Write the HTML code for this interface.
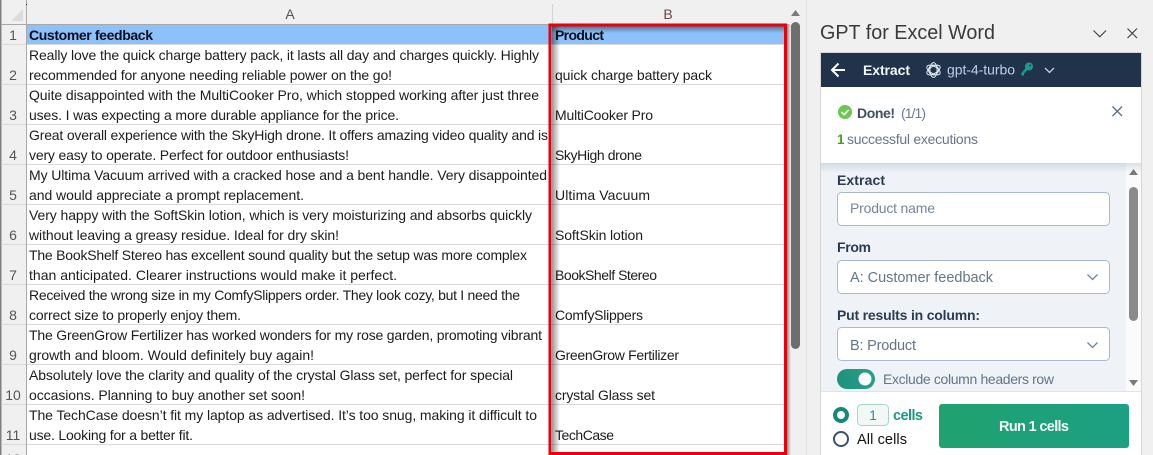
<!DOCTYPE html>
<html><head><meta charset="utf-8"><style>
html,body{margin:0;padding:0;width:1153px;height:455px;overflow:hidden;background:#f0f0f0}
svg{display:block}
text{font-family:"Liberation Sans",sans-serif;font-size:14px;fill:#1c1c1c}
.c{font-size:14px}
.h{font-size:14px;font-weight:bold;fill:#0c0c1c}
.n{fill:#555;font-size:14px;text-anchor:middle}
.l{font-size:14px;font-weight:bold;fill:#2a3b52}
.v{font-size:14.5px;fill:#64748a}
</style></head><body>
<svg width="1153" height="455" viewBox="0 0 1153 455" xmlns="http://www.w3.org/2000/svg">
<defs>
<linearGradient id="sl" x1="0" x2="1" y1="0" y2="0"><stop offset="0" stop-color="#000" stop-opacity=".4"/><stop offset="1" stop-color="#000" stop-opacity="0"/></linearGradient>
<linearGradient id="st" x1="0" x2="0" y1="0" y2="1"><stop offset="0" stop-color="#000" stop-opacity=".42"/><stop offset="1" stop-color="#000" stop-opacity="0"/></linearGradient>
<linearGradient id="sr" x1="0" x2="1" y1="0" y2="0"><stop offset="0" stop-color="#000" stop-opacity=".4"/><stop offset="1" stop-color="#000" stop-opacity="0"/></linearGradient>
<linearGradient id="sp" x1="0" x2="0" y1="0" y2="1"><stop offset="0" stop-color="#8a9ab0" stop-opacity=".28"/><stop offset="1" stop-color="#8a9ab0" stop-opacity="0"/></linearGradient>
<linearGradient id="btn" x1="0" x2="1" y1="0" y2="0"><stop offset="0" stop-color="#20a170"/><stop offset="1" stop-color="#1ca083"/></linearGradient>
<linearGradient id="tg" x1="0" x2="1" y1="0" y2="0"><stop offset="0" stop-color="#20917c"/><stop offset="1" stop-color="#22a08a"/></linearGradient>
</defs>

<!-- sheet -->
<rect x="0" y="0" width="800" height="455" fill="#f0f0f0"/>
<rect x="27" y="25" width="760" height="430" fill="#fff"/>
<rect x="27" y="25" width="758" height="19" fill="#8cc1f9"/>
<rect x="0" y="0" width="1.5" height="455" fill="#808080"/>
<rect x="26" y="0" width="1" height="455" fill="#a8a8a8"/>
<rect x="1" y="24" width="786" height="1" fill="#a8a8a8"/>
<rect x="26" y="4" width="1" height="1" fill="#222"/>
<polygon points="23,9 23,21 11,21" fill="#dcdcdc"/>
<rect x="552" y="4" width="1" height="20" fill="#d4d4d4"/>

<g fill="#d9d9d9">
<rect x="27" y="44" width="758" height="1"/><rect x="27" y="84" width="758" height="1"/><rect x="27" y="124" width="758" height="1"/><rect x="27" y="164" width="758" height="1"/><rect x="27" y="204" width="758" height="1"/><rect x="27" y="244" width="758" height="1"/><rect x="27" y="284" width="758" height="1"/><rect x="27" y="324" width="758" height="1"/><rect x="27" y="364" width="758" height="1"/><rect x="27" y="404" width="758" height="1"/><rect x="27" y="444" width="758" height="1"/>
<rect x="1" y="44" width="25" height="1"/><rect x="1" y="84" width="25" height="1"/><rect x="1" y="124" width="25" height="1"/><rect x="1" y="164" width="25" height="1"/><rect x="1" y="204" width="25" height="1"/><rect x="1" y="244" width="25" height="1"/><rect x="1" y="284" width="25" height="1"/><rect x="1" y="324" width="25" height="1"/><rect x="1" y="364" width="25" height="1"/><rect x="1" y="404" width="25" height="1"/><rect x="1" y="444" width="25" height="1"/>
</g>

<text x="290" y="19" class="n">A</text>
<text x="668" y="19" class="n" style="fill:#6e4444">B</text>
<text x="13" y="40" class="n">1</text><text x="13" y="80" class="n">2</text><text x="13" y="120" class="n">3</text><text x="13" y="160" class="n">4</text><text x="13" y="200" class="n">5</text><text x="13" y="240" class="n">6</text><text x="13" y="280" class="n">7</text><text x="13" y="320" class="n">8</text><text x="13" y="360" class="n">9</text><text x="13" y="400" class="n">10</text><text x="13" y="440" class="n">11</text><text x="13" y="464" class="n">12</text>

<text x="29" y="40" class="h" textLength="124" lengthAdjust="spacing">Customer feedback</text>
<text x="555" y="40" class="h" textLength="49" lengthAdjust="spacing">Product</text>

<text x="29" y="60" class="c" textLength="510" lengthAdjust="spacing">Really love the quick charge battery pack, it lasts all day and charges quickly. Highly</text>
<text x="29" y="80" class="c" textLength="363" lengthAdjust="spacing">recommended for anyone needing reliable power on the go!</text>
<text x="29" y="100" class="c" textLength="510" lengthAdjust="spacing">Quite disappointed with the MultiCooker Pro, which stopped working after just three</text>
<text x="29" y="120" class="c" textLength="370" lengthAdjust="spacing">uses. I was expecting a more durable appliance for the price.</text>
<text x="29" y="140" class="c" textLength="519" lengthAdjust="spacing">Great overall experience with the SkyHigh drone. It offers amazing video quality and is</text>
<text x="29" y="160" class="c" textLength="320" lengthAdjust="spacing">very easy to operate. Perfect for outdoor enthusiasts!</text>
<text x="29" y="180" class="c" textLength="518" lengthAdjust="spacing">My Ultima Vacuum arrived with a cracked hose and a bent handle. Very disappointed</text>
<text x="29" y="200" class="c" textLength="275" lengthAdjust="spacing">and would appreciate a prompt replacement.</text>
<text x="29" y="220" class="c" textLength="503" lengthAdjust="spacing">Very happy with the SoftSkin lotion, which is very moisturizing and absorbs quickly</text>
<text x="29" y="240" class="c" textLength="310" lengthAdjust="spacing">without leaving a greasy residue. Ideal for dry skin!</text>
<text x="29" y="260" class="c" textLength="498" lengthAdjust="spacing">The BookShelf Stereo has excellent sound quality but the setup was more complex</text>
<text x="29" y="280" class="c" textLength="368" lengthAdjust="spacing">than anticipated. Clearer instructions would make it perfect.</text>
<text x="29" y="300" class="c" textLength="491" lengthAdjust="spacing">Received the wrong size in my ComfySlippers order. They look cozy, but I need the</text>
<text x="29" y="320" class="c" textLength="212" lengthAdjust="spacing">correct size to properly enjoy them.</text>
<text x="29" y="340" class="c" textLength="513" lengthAdjust="spacing">The GreenGrow Fertilizer has worked wonders for my rose garden, promoting vibrant</text>
<text x="29" y="360" class="c" textLength="285" lengthAdjust="spacing">growth and bloom. Would definitely buy again!</text>
<text x="29" y="380" class="c" textLength="484" lengthAdjust="spacing">Absolutely love the clarity and quality of the crystal Glass set, perfect for special</text>
<text x="29" y="400" class="c" textLength="276" lengthAdjust="spacing">occasions. Planning to buy another set soon!</text>
<text x="29" y="420" class="c" textLength="508" lengthAdjust="spacing">The TechCase doesn’t fit my laptop as advertised. It’s too snug, making it difficult to</text>
<text x="29" y="440" class="c" textLength="164" lengthAdjust="spacing">use. Looking for a better fit.</text>

<text x="555" y="80" class="c" textLength="157" lengthAdjust="spacing">quick charge battery pack</text>
<text x="555" y="120" class="c" textLength="98" lengthAdjust="spacing">MultiCooker Pro</text>
<text x="555" y="160" class="c" textLength="87" lengthAdjust="spacing">SkyHigh drone</text>
<text x="555" y="200" class="c" textLength="95" lengthAdjust="spacing">Ultima Vacuum</text>
<text x="555" y="240" class="c" textLength="88" lengthAdjust="spacing">SoftSkin lotion</text>
<text x="555" y="280" class="c" textLength="102" lengthAdjust="spacing">BookShelf Stereo</text>
<text x="555" y="320" class="c" textLength="88" lengthAdjust="spacing">ComfySlippers</text>
<text x="555" y="360" class="c" textLength="124" lengthAdjust="spacing">GreenGrow Fertilizer</text>
<text x="555" y="400" class="c" textLength="100" lengthAdjust="spacing">crystal Glass set</text>
<text x="555" y="440" class="c" textLength="59" lengthAdjust="spacing">TechCase</text>

<!-- selection shadow + red box -->
<rect x="552" y="26" width="8" height="426" fill="url(#sl)"/>
<rect x="552" y="26" width="232" height="7" fill="url(#st)"/>
<rect x="787" y="24" width="4" height="431" fill="url(#sr)"/>
<rect x="550" y="25" width="235.5" height="428.5" fill="none" stroke="#e8000b" stroke-width="3"/>

<!-- sheet scrollbar -->
<rect x="791" y="0" width="9" height="455" fill="#f0f0f0" opacity=".5"/>
<polygon points="795.5,10 800,16 791,16" fill="#7a7a7a"/>
<rect x="791" y="22" width="9" height="327" rx="4.5" fill="#6e6e6e"/>
<rect x="806" y="0" width="1" height="455" fill="#e2e2e2"/>

<!-- task pane title -->
<text x="820" y="39" textLength="175" lengthAdjust="spacingAndGlyphs" style="font-size:20.5px;fill:#3a3a3a">GPT for Excel Word</text>
<path d="M1093.5 30.5L1099.8 36.8L1106 30.5" fill="none" stroke="#444" stroke-width="1.2"/>
<path d="M1127.5 28.5L1137 38M1137 28.5L1127.5 38" fill="none" stroke="#444" stroke-width="1.2"/>

<!-- pane -->
<rect x="820.5" y="52.5" width="321" height="403" fill="#fff" stroke="#d6d6d6"/>
<rect x="821" y="53" width="320" height="34" fill="#20334a"/>
<path d="M845 70H832.5M838.5 63.5L832 70L838.5 76.5" fill="none" stroke="#fff" stroke-width="2"/>
<text x="863" y="75" textLength="47" lengthAdjust="spacing" style="font-size:14px;font-weight:bold;fill:#f2f6fb">Extract</text>
<g fill="none" stroke="#dfe6ee" stroke-width="1">
<circle cx="933.5" cy="70" r="5"/>
<ellipse cx="933.5" cy="70" rx="7.4" ry="3.6" transform="rotate(30 933.5 70)"/>
<ellipse cx="933.5" cy="70" rx="7.4" ry="3.6" transform="rotate(90 933.5 70)"/>
<ellipse cx="933.5" cy="70" rx="7.4" ry="3.6" transform="rotate(150 933.5 70)"/>
</g>
<text x="947" y="74.500" textLength="68" lengthAdjust="spacing" style="font-size:14px;fill:#b9cfee">gpt-4-turbo</text>
<g fill="#1f9a8a"><circle cx="1029" cy="66.500" r="4"/><path d="M1026 67.500L1028 69.500L1024 73.500V75.500H1021.500V73L1026 67.500Z"/></g>
<circle cx="1030" cy="65.500" r="1" fill="#20334a"/>
<path d="M1045 68L1049.500 72.500L1054 68" fill="none" stroke="#c5d2e2" stroke-width="1.300"/>

<!-- done -->
<circle cx="845" cy="112" r="7" fill="#6cc751"/>
<path d="M841.500 112L844.200 114.700L848.700 109.800" fill="none" stroke="#fff" stroke-width="1.600"/>
<text x="857" y="118" textLength="38" lengthAdjust="spacing" style="font-size:14px;font-weight:bold;fill:#3d4f66">Done!</text>
<text x="901" y="118" textLength="25" lengthAdjust="spacing" style="font-size:14px;fill:#6b7a8d">(1/1)</text>
<path d="M1112.500 106.500L1122 116M1122 106.500L1112.500 116" fill="none" stroke="#5d6f86" stroke-width="1.400"/>
<text x="837" y="144" style="font-size:13.500px;font-weight:bold;fill:#3fa31c">1</text>
<text x="847" y="144" textLength="131" lengthAdjust="spacing" style="font-size:14px;fill:#67768a">successful executions</text>

<!-- form -->
<rect x="821" y="163" width="305" height="228" fill="#eff3f8"/>
<rect x="1126" y="163" width="15" height="228" fill="#fbfbfb"/>
<rect x="821" y="163" width="320" height="10" fill="url(#sp)"/>
<polygon points="1133.500,169 1138,175 1129,175" fill="#7a7a7a"/>
<rect x="1129" y="187" width="9" height="134" rx="4.500" fill="#8a8a8a"/>
<polygon points="1129,380 1138,380 1133.500,386" fill="#7a7a7a"/>

<text x="837" y="185" class="l" textLength="48" lengthAdjust="spacing">Extract</text>
<rect x="837.500" y="192.500" width="272" height="33" rx="4" fill="#fff" stroke="#a9bacf"/>
<text x="850" y="213" textLength="85" lengthAdjust="spacing" style="font-size:14px;fill:#75859b">Product name</text>

<text x="837" y="252" class="l" textLength="34" lengthAdjust="spacing">From</text>
<rect x="837.500" y="260.500" width="272" height="33" rx="4" fill="#fff" stroke="#a9bacf"/>
<text x="850" y="282" class="v" textLength="143" lengthAdjust="spacing">A: Customer feedback</text>
<path d="M1087.500 274.500L1092.500 279.500L1097.500 274.500" fill="none" stroke="#6f8199" stroke-width="1.300"/>

<text x="837" y="320" class="l" textLength="143" lengthAdjust="spacing">Put results in column:</text>
<rect x="837.500" y="327.500" width="272" height="33" rx="4" fill="#fff" stroke="#a9bacf"/>
<text x="850" y="350" class="v" textLength="66" lengthAdjust="spacing">B: Product</text>
<path d="M1087.500 342.500L1092.500 347.500L1097.500 342.500" fill="none" stroke="#6f8199" stroke-width="1.300"/>

<rect x="837" y="369" width="38" height="20" rx="10" fill="url(#tg)"/>
<circle cx="865" cy="379" r="6.500" fill="#fff"/>
<text x="883" y="384" textLength="171" lengthAdjust="spacing" style="font-size:14px;fill:#64748a">Exclude column headers row</text>

<!-- footer -->
<rect x="821" y="391" width="320" height="64" fill="#fff"/>
<rect x="821" y="391" width="320" height="1" fill="#dbe3ee"/>
<circle cx="841" cy="415" r="6" fill="#fff" stroke="#13897a" stroke-width="4"/>
<rect x="857.500" y="404.500" width="31" height="21" rx="4" fill="#f1f8f6" stroke="#a8d3c9"/>
<text x="873" y="420" text-anchor="middle" style="font-size:13.500px;fill:#1b8f9b">1</text>
<text x="893" y="420" textLength="30" lengthAdjust="spacing" style="font-size:14.500px;font-weight:bold;fill:#1a9a7e">cells</text>
<circle cx="841" cy="439" r="7" fill="#fff" stroke="#3e5068" stroke-width="2"/>
<text x="857" y="444" textLength="50" lengthAdjust="spacing" style="font-size:14.500px;fill:#111;-webkit-text-stroke:.3px #111">All cells</text>
<rect x="939" y="404" width="190" height="44" rx="3" fill="url(#btn)"/>
<text x="999" y="431" textLength="70" lengthAdjust="spacing" style="font-size:14.500px;font-weight:bold;fill:#f4fbf8">Run 1 cells</text>
</svg>
</body></html>
